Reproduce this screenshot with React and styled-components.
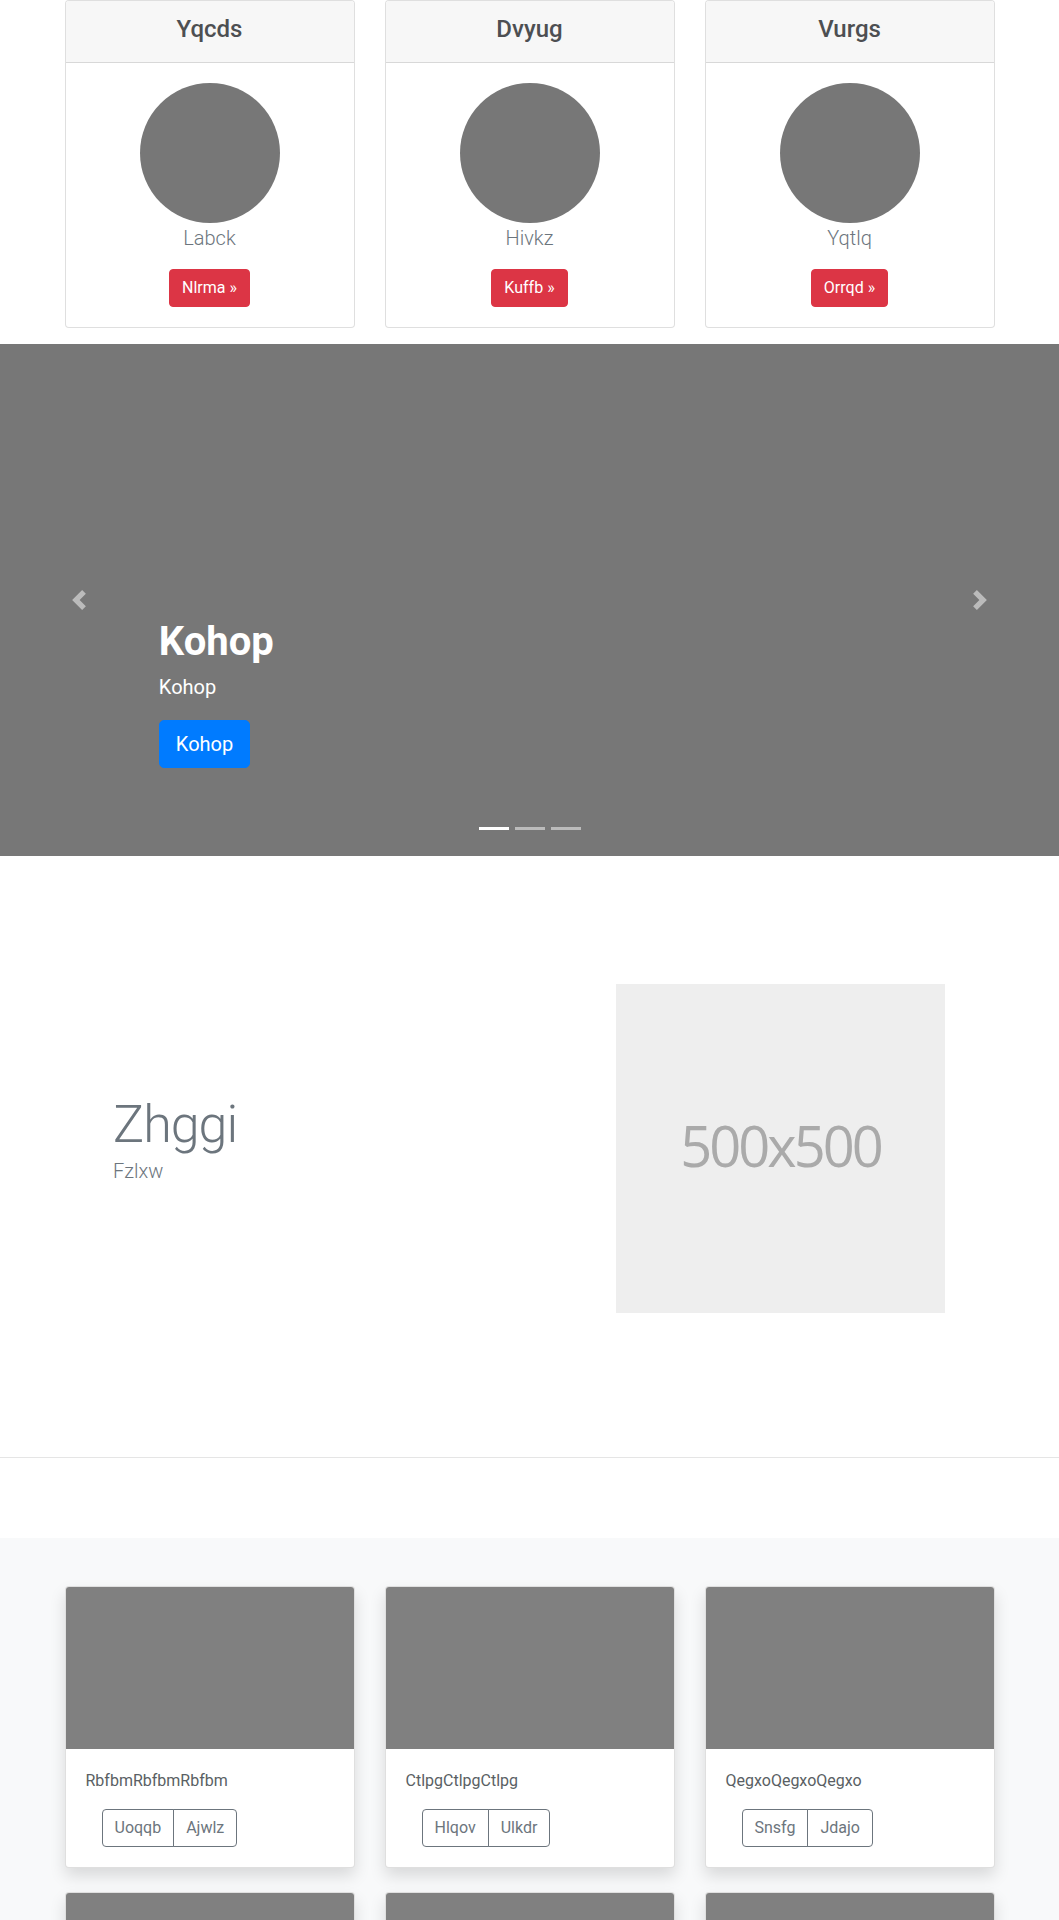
import React from "react";
import styled, { createGlobalStyle } from "styled-components";

const GlobalStyle = createGlobalStyle`
  * { box-sizing: border-box; }
  body {
    margin: 0;
    font-family: Roboto, "Noto Sans", "Liberation Sans", sans-serif;
    font-size: 16px;
    line-height: 1.5;
    color: #212529;
    background: #fff;
  }
`;

const Container = styled.div`
  width: 960px;
  margin: 0 auto;
  padding: 0 15px;
`;

const ThreeGrid = styled.div`
  display: grid;
  grid-template-columns: repeat(3, 1fr);
  column-gap: 30px;
  row-gap: ${(p) => p.$rowGap || 0}px;
`;

/* ---------- Pricing-like cards ---------- */
const TopCards = styled(ThreeGrid)`
  margin-bottom: 16px;
`;

const ProfileCard = styled.div`
  border: 1px solid rgba(0, 0, 0, 0.125);
  border-radius: 4px;
  background: #fff;
  text-align: center;
  overflow: hidden;
`;

const CardHeader = styled.div`
  background: #f7f7f7;
  border-bottom: 1px solid rgba(0, 0, 0, 0.125);
  padding: 14px 20px 10px;
`;

const CardTitle = styled.h4`
  margin: 0 0 8px;
  font-size: 24px;
  line-height: 1.2;
  font-weight: 500;
  color: #4d4f52;
`;

const CardBody = styled.div`
  padding: 20px;
`;

const Avatar = styled.div`
  width: 140px;
  height: 140px;
  border-radius: 50%;
  background: #777;
  margin: 0 auto;
`;

const Lead = styled.p`
  margin: 0 0 16px;
  padding-top: 1px;
  font-size: 20px;
  line-height: 29px;
  font-weight: 300;
  color: #6c757d;
`;

const DangerButton = styled.a`
  display: inline-block;
  background: #dc3545;
  color: #fff;
  border: 1px solid #dc3545;
  border-radius: 4px;
  padding: 6px 12px;
  font-size: 16px;
  line-height: 24px;
  text-decoration: none;
`;

/* ---------- Carousel ---------- */
const Carousel = styled.div`
  position: relative;
  height: 512px;
  background: #777;
  overflow: hidden;
`;

const Control = styled.span`
  position: absolute;
  top: 0;
  bottom: 0;
  ${(p) => (p.$side === "left" ? "left: 0;" : "right: 0;")}
  width: 15%;
  display: flex;
  align-items: center;
  justify-content: center;
  opacity: 0.5;
`;

const Caption = styled.div`
  position: absolute;
  left: 15%;
  right: 15%;
  bottom: 48px;
  padding: 20px 0;
  color: #fff;
  text-align: left;
`;

const CaptionTitle = styled.h1`
  margin: 0 0 6px;
  font-size: 40px;
  line-height: 48px;
  font-weight: 700;
`;

const CaptionText = styled.p`
  margin: 0 0 18px;
  font-size: 20px;
  line-height: 30px;
`;

const ButtonLine = styled.p`
  margin: 0 0 20px;
  line-height: 48px;
  height: 48px;
`;

const PrimaryLarge = styled.a`
  display: inline-block;
  vertical-align: top;
  background: #007bff;
  color: #fff;
  border: 1px solid #007bff;
  border-radius: 5px;
  padding: 8px 16px;
  font-size: 20px;
  line-height: 30px;
  text-decoration: none;
`;

const Indicators = styled.ol`
  position: absolute;
  left: 0;
  right: 0;
  bottom: 0;
  margin: 0 0 16px;
  padding: 0;
  list-style: none;
  display: flex;
  justify-content: center;
`;

const Indicator = styled.li`
  width: 30px;
  height: 3px;
  margin: 10px 3px;
  background: #fff;
  opacity: ${(p) => (p.$active ? 1 : 0.5)};
`;

/* ---------- Featurette ---------- */
const Featurette = styled.section`
  display: grid;
  grid-template-columns: 1fr 329px;
  align-items: center;
  padding: 128px 114px 144px 113px;
`;

const FeatureText = styled.div``;

const FeatureHeading = styled.h2`
  margin: 0;
  font-size: 52px;
  line-height: 1.25;
  font-weight: 300;
  letter-spacing: -1px;
  color: #6c757d;
`;

const FeatureSub = styled.p`
  margin: 0 0 20px;
  font-size: 20px;
  line-height: 28px;
  font-weight: 300;
  color: #6c757d;
`;

const Placeholder = styled.div`
  width: 329px;
  height: 329px;
  padding-bottom: 6px;
  background: #eee;
  color: #aaa;
  display: flex;
  align-items: center;
  justify-content: center;
  font-family: "Open Sans", "Noto Sans", sans-serif;
  font-size: 56px;
  letter-spacing: -3px;
`;

const Divider = styled.hr`
  margin: 0;
  border: 0;
  border-top: 1px solid #e5e5e5;
`;

const Spacer = styled.div`
  height: 80px;
`;

/* ---------- Album ---------- */
const Album = styled.section`
  background: #f8f9fa;
  padding: 48px 0;
`;

const AlbumCard = styled.div`
  background: #fff;
  border: 1px solid rgba(0, 0, 0, 0.125);
  border-radius: 4px;
  overflow: hidden;
  box-shadow: 0 8px 16px rgba(0, 0, 0, 0.13);
`;

const Thumb = styled.div`
  height: 162px;
  background: #808080;
`;

const AlbumBody = styled.div`
  padding: 20px;
`;

const AlbumText = styled.p`
  margin: 0 0 16px;
  font-size: 16px;
  line-height: 24px;
  color: #5a5f64;
`;

const BtnGroup = styled.div`
  display: inline-flex;
  margin-left: 16px;
`;

const OutlineBtn = styled.button`
  font-family: inherit;
  font-size: 16px;
  line-height: 24px;
  padding: 6px 12px;
  background: transparent;
  color: #6c757d;
  border: 1px solid #6c757d;
  border-radius: 0;
  &:first-child {
    border-radius: 4px 0 0 4px;
  }
  &:last-child {
    border-radius: 0 4px 4px 0;
    margin-left: -1px;
  }
`;

const Chevron = ({ dir }) => (
  <svg width="20" height="20" viewBox="0 0 8 8" fill="#fff">
    {dir === "left" ? (
      <path d="M5.25 0l-4 4 4 4 1.5-1.5L4.25 4l2.5-2.5L5.25 0z" />
    ) : (
      <path d="M2.75 0l-1.5 1.5L3.75 4l-2.5 2.5L2.75 8l4-4-4-4z" />
    )}
  </svg>
);

const profiles = [
  { title: "Yqcds", name: "Labck", btn: "Nlrma" },
  { title: "Dvyug", name: "Hivkz", btn: "Kuffb" },
  { title: "Vurgs", name: "Yqtlq", btn: "Orrqd" },
];

const albums = [
  { text: "RbfbmRbfbmRbfbm", a: "Uoqqb", b: "Ajwlz" },
  { text: "CtlpgCtlpgCtlpg", a: "Hlqov", b: "Ulkdr" },
  { text: "QegxoQegxoQegxo", a: "Snsfg", b: "Jdajo" },
];

export default function App() {
  return (
    <>
      <GlobalStyle />
      <Container>
        <TopCards>
          {profiles.map((p) => (
            <ProfileCard key={p.title}>
              <CardHeader>
                <CardTitle>{p.title}</CardTitle>
              </CardHeader>
              <CardBody>
                <Avatar />
                <Lead>{p.name}</Lead>
                <DangerButton href="#">{p.btn} »</DangerButton>
              </CardBody>
            </ProfileCard>
          ))}
        </TopCards>
      </Container>

      <Carousel>
        <Control $side="left">
          <Chevron dir="left" />
        </Control>
        <Caption>
          <CaptionTitle>Kohop</CaptionTitle>
          <CaptionText>Kohop</CaptionText>
          <ButtonLine>
            <PrimaryLarge href="#">Kohop</PrimaryLarge>
          </ButtonLine>
        </Caption>
        <Control $side="right">
          <Chevron dir="right" />
        </Control>
        <Indicators>
          <Indicator $active />
          <Indicator />
          <Indicator />
        </Indicators>
      </Carousel>

      <Featurette>
        <FeatureText>
          <FeatureHeading>Zhggi</FeatureHeading>
          <FeatureSub>Fzlxw</FeatureSub>
        </FeatureText>
        <Placeholder>500x500</Placeholder>
      </Featurette>

      <Divider />
      <Spacer />

      <Album>
        <Container>
          <ThreeGrid $rowGap={24}>
            {albums.map((c) => (
              <AlbumCard key={c.text}>
                <Thumb />
                <AlbumBody>
                  <AlbumText>{c.text}</AlbumText>
                  <BtnGroup>
                    <OutlineBtn>{c.a}</OutlineBtn>
                    <OutlineBtn>{c.b}</OutlineBtn>
                  </BtnGroup>
                </AlbumBody>
              </AlbumCard>
            ))}
            {[0, 1, 2].map((i) => (
              <AlbumCard key={`more-${i}`}>
                <Thumb />
              </AlbumCard>
            ))}
          </ThreeGrid>
        </Container>
      </Album>
    </>
  );
}
